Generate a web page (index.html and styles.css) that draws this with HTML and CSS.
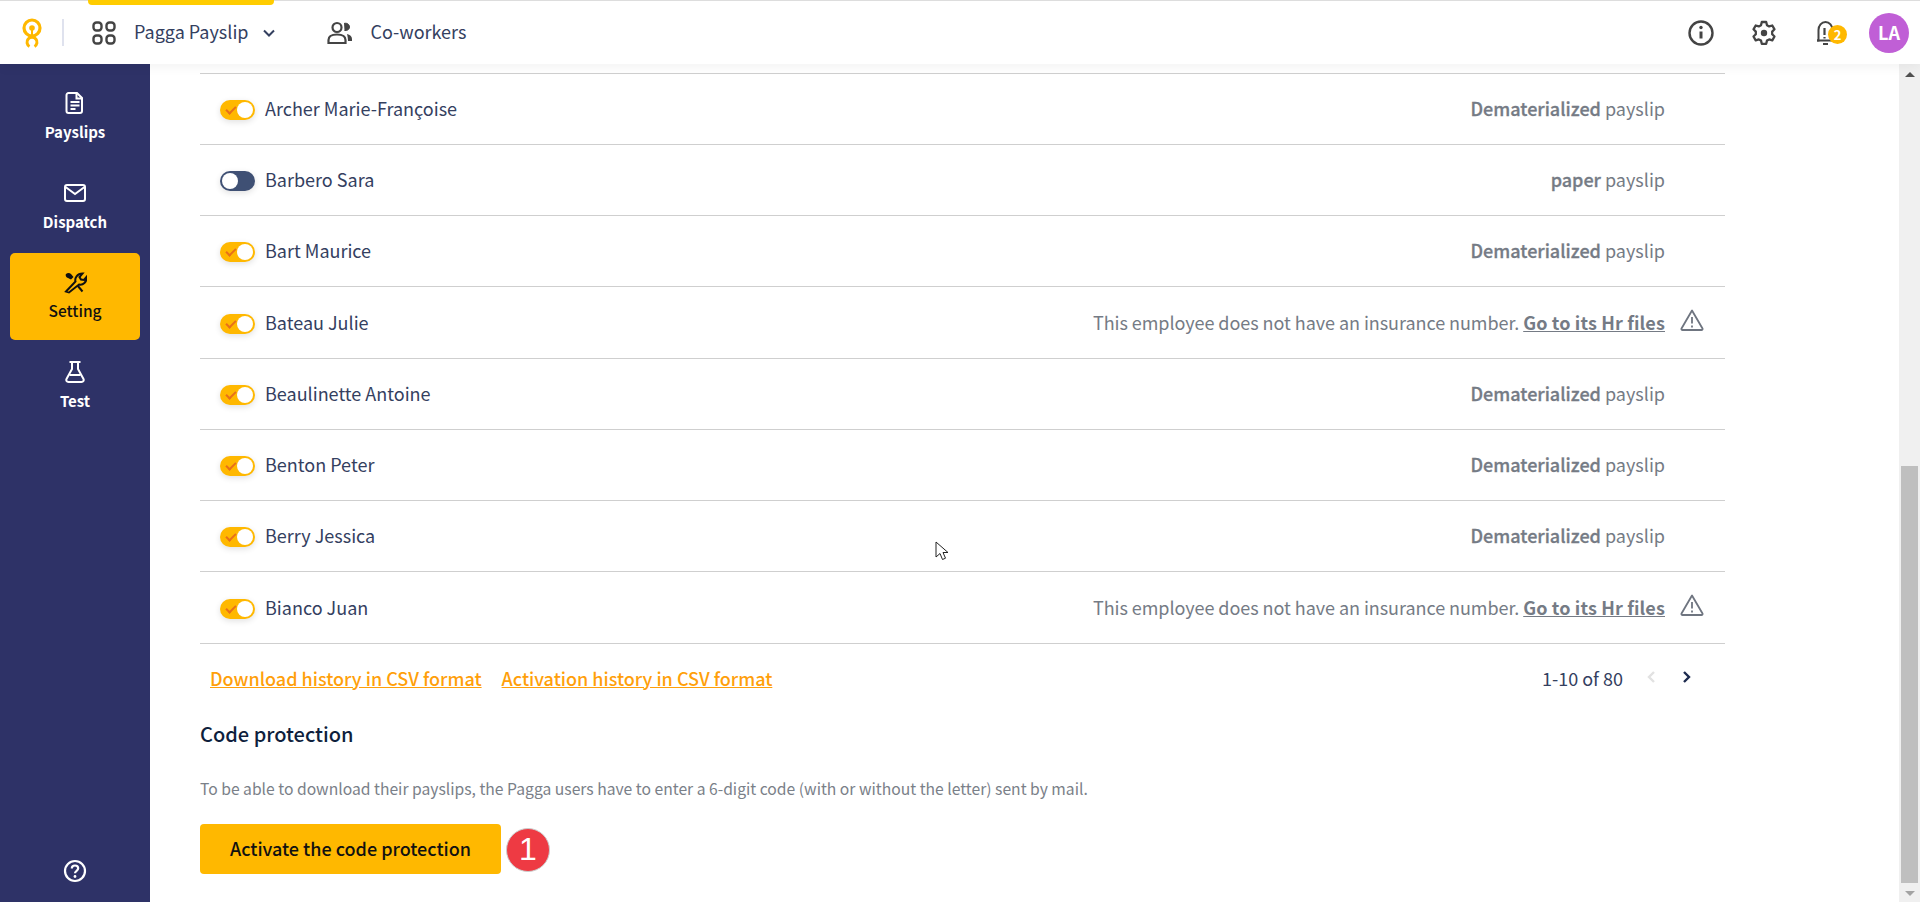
FILE: index.html
```html
<!DOCTYPE html>
<html>

<head>
  <meta http-equiv="Content-Type" content="text/html; charset=utf-8">
  <title>Pagga Payslip</title>
  <link rel="stylesheet" href="styles.css">
</head>

<body>

  <header class="topbar">
    <svg class="logo" width="24" height="30" viewBox="0 0 24 30" fill="none" stroke="#ffb800">
      <circle cx="12" cy="10" r="8" stroke-width="3.200" />
      <path d="M12 8v9" stroke-width="2" />
      <circle cx="12" cy="10" r="2.800" fill="#ffb800" stroke="none" />
      <path d="M9.500 28.500A5 5 0 1 1 14.500 28.500" stroke-width="3" />
    </svg>
    <span class="topbar-sep"></span>

    <nav class="topnav">
      <a class="topnav-item active">
        <svg width="24" height="24" viewBox="0 0 24 24" fill="none" stroke="#444" stroke-width="2.400">
          <rect x="1.500" y="1.500" width="8" height="8" rx="3" />
          <rect x="14.500" y="1.500" width="8" height="8" rx="3" />
          <rect x="1.500" y="14.500" width="8" height="8" rx="3" />
          <rect x="14.500" y="14.500" width="8" height="8" rx="3" />
        </svg>
        <span class="topnav-label">Pagga Payslip</span>
        <svg width="12" height="8" viewBox="0 0 12 8" fill="none" stroke="#34405f" stroke-width="2">
          <path d="M1 1.500l5 5 5-5" />
        </svg>
      </a>
      <a class="topnav-item">
        <svg width="26" height="24" viewBox="0 0 26 24" fill="none" stroke="#444" stroke-width="2.200">
          <circle cx="10" cy="6.500" r="4.500" />
          <path d="M1.500 22v-3c0-3.500 3-5.500 8.500-5.500s8.500 2 8.500 5.500v3z" />
          <path d="M17 2.500c3-1 5.500 1 5.500 3.500S20 10 17.500 9.500" fill="#444" stroke-width="1" />
          <path d="M20 13c3 .5 5 2.500 5 5v2h-4c0-3-.5-5-1-7z" fill="#444" stroke="none" />
        </svg>
        <span class="topnav-label">Co-workers</span>
      </a>
    </nav>

    <div class="topbar-right">
      <svg class="info-icon" width="26" height="26" viewBox="0 0 26 26" fill="none" stroke="#444" stroke-width="2.400">
        <circle cx="13" cy="13" r="11.500" />
        <path d="M13 11.500v7" stroke-width="3" />
        <circle cx="13" cy="7.500" r="1.700" fill="#444" stroke="none" />
      </svg>
      <svg class="gear-icon" width="26" height="26" viewBox="0 0 26 26" fill="none" stroke="#444" stroke-width="2.300">
        <path d="M10.800 2h4.400l.8 3.200 2.200 1.200 3.100-.9 2.200 3.800-2.300 2.300v2.600l2.300 2.300-2.200 3.800-3.100-.9-2.200 1.200-.8 3.200h-4.400l-.8-3.200-2.200-1.200-3.100.9-2.200-3.800 2.300-2.300v-2.600L2.500 9.300l2.200-3.800 3.100.9L10 5.200z" stroke-linejoin="round" />
        <circle cx="13" cy="13" r="3.200" fill="#444" stroke="none" />
      </svg>
      <div class="bell">
        <svg width="22" height="26" viewBox="0 0 22 26" fill="none" stroke="#444" stroke-width="2">
          <path d="M2 20.500h1.500V10c0-4.500 3-8 7-8s7 3.500 7 8v10.500H19" />
          <path d="M2 20.500h17M8 24h5" />
          <path d="M9.500 8v7M9.500 17v1.500" stroke-width="2.200" />
        </svg>
        <span class="bell-count">2</span>
      </div>
      <span class="avatar">LA</span>
    </div>
  </header>

  <div class="layout">
    <aside class="sidebar">
      <a class="side-item">
        <svg width="24" height="24" viewBox="0 0 24 24" fill="none" stroke="#fff" stroke-width="2">
          <path d="M5.500 2h8.500l5 5v13a2 2 0 0 1-2 2H5.500a2 2 0 0 1-2-2V4a2 2 0 0 1 2-2z" />
          <path d="M13.500 2v5.500H19M7.500 11h9M7.500 14.500h9M7.500 18h5" />
        </svg>
        <span>Payslips</span>
      </a>
      <a class="side-item">
        <svg width="24" height="24" viewBox="0 0 24 24" fill="none" stroke="#fff" stroke-width="2">
          <rect x="2" y="4" width="20" height="16" rx="2" />
          <path d="M2.500 6l9.500 7 9.500-7" />
        </svg>
        <span>Dispatch</span>
      </a>
      <a class="side-item active">
        <svg width="24" height="24" viewBox="0 0 24 24" fill="none" stroke="#111" stroke-width="2">
          <path d="M3 21.500l9.500-10c-1-3 1.500-8 7-8l-3 3.500 1.500 2.500 3 .5 2.500-3c.5 5-3.500 8.500-7.500 7.500L6 22.500z" />
          <path d="M14.500 15.500l5 6" />
          <path d="M3 4c1.500-1.500 3.500-1.500 5 0l2.500 3-2.500 2.500L5 8C3.500 7.500 2 5.500 3 4z" fill="#111" stroke="none" />
        </svg>
        <span>Setting</span>
      </a>
      <a class="side-item">
        <svg width="24" height="24" viewBox="0 0 24 24" fill="none" stroke="#fff" stroke-width="2">
          <path d="M6.500 2h11M9 2v7L3.500 19c-.8 1.500.2 3 2 3h13c1.800 0 2.800-1.500 2-3L15 9V2" />
          <path d="M6.500 15h11" />
        </svg>
        <span>Test</span>
      </a>
      <a class="side-help">
        <svg width="24" height="24" viewBox="0 0 24 24" fill="none" stroke="#fff" stroke-width="2.200">
          <circle cx="12" cy="12" r="10" />
          <path d="M8.800 9.500c0-2 1.500-3 3.200-3s3.200 1 3.200 2.800c0 2.500-3.200 2.500-3.200 5" />
          <circle cx="12" cy="17.500" r="1.400" fill="#fff" stroke="none" />
        </svg>
      </a>
    </aside>

    <main class="content">
      <div class="employees">
        <div class="row">
          <span class="toggle on"></span>
          <span class="name">Archer Marie-Françoise</span>
          <span class="status"><b>Dematerialized</b> payslip</span>
        </div>
        <div class="row">
          <span class="toggle"></span>
          <span class="name">Barbero Sara</span>
          <span class="status"><b>paper</b> payslip</span>
        </div>
        <div class="row">
          <span class="toggle on"></span>
          <span class="name">Bart Maurice</span>
          <span class="status"><b>Dematerialized</b> payslip</span>
        </div>
        <div class="row has-warning">
          <span class="toggle on"></span>
          <span class="name">Bateau Julie</span>
          <span class="status">This employee does not have an insurance number. <a class="hr-link">Go to its Hr files</a></span>
          <svg class="warn" width="24" height="24" viewBox="0 0 24 24" fill="none" stroke="#6f7580" stroke-width="1.800">
            <path d="M12 2.500L1.500 20.500c-.4.800.1 1.500 1 1.500h19c.9 0 1.400-.7 1-1.500z" stroke-linejoin="round" />
            <path d="M12 9v6.500M12 17.500v2" />
          </svg>
        </div>
        <div class="row">
          <span class="toggle on"></span>
          <span class="name">Beaulinette Antoine</span>
          <span class="status"><b>Dematerialized</b> payslip</span>
        </div>
        <div class="row">
          <span class="toggle on"></span>
          <span class="name">Benton Peter</span>
          <span class="status"><b>Dematerialized</b> payslip</span>
        </div>
        <div class="row">
          <span class="toggle on"></span>
          <span class="name">Berry Jessica</span>
          <span class="status"><b>Dematerialized</b> payslip</span>
        </div>
        <div class="row has-warning">
          <span class="toggle on"></span>
          <span class="name">Bianco Juan</span>
          <span class="status">This employee does not have an insurance number. <a class="hr-link">Go to its Hr files</a></span>
          <svg class="warn" width="24" height="24" viewBox="0 0 24 24" fill="none" stroke="#6f7580" stroke-width="1.800">
            <path d="M12 2.500L1.500 20.500c-.4.800.1 1.500 1 1.500h19c.9 0 1.400-.7 1-1.500z" stroke-linejoin="round" />
            <path d="M12 9v6.500M12 17.500v2" />
          </svg>
        </div>
      </div>

      <div class="table-footer">
        <a class="csv-link">Download history in CSV format</a>
        <a class="csv-link">Activation history in CSV format</a>
        <div class="pager">
          <span>1-10 of 80</span>
          <svg width="10" height="14" viewBox="0 0 10 14" fill="none" stroke="#e2e2e2" stroke-width="2.400">
            <path d="M8 2L3 7l5 5" />
          </svg>
          <svg width="10" height="14" viewBox="0 0 10 14" fill="none" stroke="#1d2b4f" stroke-width="2.400">
            <path d="M2 2l5 5-5 5" />
          </svg>
        </div>
      </div>

      <h2 class="section-title">Code protection</h2>
      <p class="section-text">To be able to download their payslips, the Pagga users have to enter a 6-digit code (with or without the letter) sent by mail.</p>
      <div class="section-action">
        <button class="btn-primary">Activate the code protection</button>
        <span class="step">1</span>
      </div>
    </main>

    <div class="scrollbar">
      <span class="scroll-arrow up"></span>
      <div class="scroll-track"><div class="scroll-thumb"></div></div>
      <span class="scroll-arrow down"></span>
    </div>
  </div>

  <svg class="cursor" width="16" height="22" viewBox="0 0 16 22" fill="#fff" stroke="#222" stroke-width="1">
    <path d="M1 1v15l4-3.500 2.500 6 3-1.300-2.500-5.700h5z" />
  </svg>

</body>

</html>
```

FILE: styles.css
```css
* {
  box-sizing: border-box;
}

html,
body {
  height: 100%;
  margin: 0;
  overflow: hidden;
}

body {
  display: flex;
  flex-direction: column;
  font-family: "Noto Sans CJK SC", "Noto Sans", sans-serif;
  font-size: 18px;
  line-height: 24px;
  color: #34405f;
  background: #fff;
}

svg {
  display: block;
  flex: none;
}

/* top bar */
.topbar {
  position: relative;
  z-index: 2;
  flex: none;
  display: flex;
  align-items: center;
  height: 64px;
  padding-left: 20px;
  border-top: 1px solid #ddd;
  background: #fff;
  box-shadow: 0 2px 12px rgba(0, 0, 0, 0.06);
}

.topbar-sep {
  width: 2px;
  height: 27px;
  margin-left: 18px;
  background: #dfe2ee;
}

.topnav {
  display: flex;
  height: 100%;
  margin-left: 24px;
}

.topnav-item {
  position: relative;
  display: flex;
  align-items: center;
  gap: 18px;
  padding: 0 4px;
  margin-right: 44px;
}

.topnav-label {
  margin-bottom: 4px;
}

.topnav-item svg:last-child {
  margin-left: -4px;
}

.topnav-item.active::before {
  content: "";
  position: absolute;
  top: -1px;
  left: 0;
  width: 186px;
  height: 5px;
  border-radius: 0 0 4px 4px;
  background: #ffcc00;
}

.topbar-right {
  display: flex;
  align-items: center;
  margin-left: auto;
  margin-right: 11px;
}

.info-icon {
  margin-right: 37px;
}

.gear-icon {
  margin-right: 38px;
}

.bell {
  position: relative;
  width: 22px;
  margin-right: 32px;
}

.bell-count {
  position: absolute;
  top: 5px;
  left: 13px;
  width: 19px;
  height: 19px;
  border-radius: 50%;
  background: #ffb800;
  color: #fff;
  font-size: 13px;
  font-weight: 700;
  line-height: 19px;
  text-align: center;
}

.avatar {
  width: 40px;
  height: 40px;
  border-radius: 50%;
  background: #c05fd6;
  color: #fff;
  font-size: 18px;
  font-weight: 700;
  line-height: 38px;
  text-align: center;
}

/* page under the top bar */
.layout {
  flex: 1;
  display: flex;
  min-height: 0;
}

.sidebar {
  flex: none;
  display: flex;
  flex-direction: column;
  gap: 2.5px;
  width: 150px;
  padding: 10px 10px 19px;
  background: #2e3267;
}

.side-item {
  display: flex;
  flex-direction: column;
  align-items: center;
  gap: 5px;
  height: 87px;
  padding-top: 17px;
  border-radius: 5px;
  color: #fff;
  font-size: 15px;
  font-weight: 700;
}

.side-item.active {
  gap: 4px;
  background: #ffb800;
  color: #111;
  font-size: 15.5px;
  font-weight: 500;
}

.side-help {
  display: flex;
  justify-content: center;
  margin-top: auto;
}

.content {
  flex: 1;
  min-width: 0;
  padding: 8.7px 174px 0 50px;
  overflow: hidden;
}

/* employees table */
.employees {
  border-top: 1px solid #cfcfcf;
}

.row {
  display: flex;
  align-items: center;
  height: 71.25px;
  padding: 0 60px 0 20px;
  border-bottom: 1px solid #cfcfcf;
}

.row.has-warning {
  padding-right: 21px;
}

.toggle {
  position: relative;
  width: 35px;
  height: 20px;
  margin-top: 2px;
  border-radius: 10px;
  background: #3f5074;
  box-shadow: 0 2px 6px rgba(0, 0, 0, 0.12);
}

.toggle::after {
  content: "";
  position: absolute;
  top: 2px;
  left: 2px;
  width: 16px;
  height: 16px;
  border-radius: 50%;
  background: #fff;
}

.toggle.on {
  background: #ffb800;
}

.toggle.on::after {
  left: 17px;
}

.toggle.on::before {
  content: "";
  position: absolute;
  top: 6px;
  left: 6px;
  width: 8px;
  height: 4px;
  border-left: 2px solid #e8701a;
  border-bottom: 2px solid #e8701a;
  transform: rotate(-45deg);
}

.name {
  margin-left: 10px;
  margin-bottom: 2px;
}

.status {
  margin-left: auto;
  margin-bottom: 2px;
  color: #757b85;
}

.has-warning .status {
  letter-spacing: -0.05px;
}

.status b {
  font-weight: 500;
  -webkit-text-stroke: 0.3px #757b85;
}

.hr-link {
  font-weight: 700;
  letter-spacing: 0.13px;
  text-decoration: underline;
}

.warn {
  margin-left: 15px;
  margin-top: -6px;
}

/* under the table */
.table-footer {
  display: flex;
  align-items: center;
  gap: 20px;
  height: 70px;
  padding: 0 33px 2px 10px;
}

.csv-link {
  color: #ff9f0a;
  font-weight: 500;
  text-decoration: underline;
}

.pager {
  display: flex;
  align-items: center;
  gap: 26px;
  margin-left: auto;
  color: #34405f;
}

.pager span {
  margin-right: -3px;
}

.pager svg {
  margin-top: -2px;
}

.section-title {
  margin: 0;
  padding-top: 6px;
  color: #0f1f3d;
  font-size: 20px;
  font-weight: 500;
  line-height: 28px;
}

.section-text {
  margin: 30px 0 0;
  color: #7a8088;
  font-size: 15.68px;
  line-height: 22px;
}

.section-action {
  display: flex;
  align-items: center;
  gap: 5px;
  margin-top: 24px;
}

.btn-primary {
  width: 301px;
  height: 50px;
  padding: 0 0 2px;
  border: 0;
  border-radius: 4px;
  background: #ffb800;
  color: #111;
  font-family: inherit;
  font-size: 18px;
  font-weight: 500;
  white-space: nowrap;
}

.step {
  width: 44px;
  height: 44px;
  margin-top: 2px;
  border: 1px solid #ccc;
  border-radius: 50%;
  background: #ee3a43;
  color: #fff;
  font-family: "Liberation Sans", sans-serif;
  font-size: 32px;
  line-height: 40px;
  text-align: center;
}

/* browser scrollbar */
.scrollbar {
  flex: none;
  display: flex;
  flex-direction: column;
  align-items: center;
  width: 21px;
  background: #f0f0f0;
}

.scroll-arrow {
  flex: none;
  width: 0;
  height: 0;
  border-left: 5px solid transparent;
  border-right: 5px solid transparent;
}

.scroll-arrow.up {
  margin: 8px 0 6px;
  border-bottom: 5px solid #505050;
}

.scroll-arrow.down {
  margin: 8px 0 6px;
  border-top: 5px solid #a3a3a3;
}

.scroll-track {
  flex: 1;
  display: flex;
  flex-direction: column;
  justify-content: flex-end;
  width: 100%;
  padding: 0 2px;
}

.scroll-thumb {
  height: 417px;
  background: #bfbfbf;
}

.cursor {
  position: absolute;
  top: 541px;
  left: 935px;
  z-index: 3;
}
```
